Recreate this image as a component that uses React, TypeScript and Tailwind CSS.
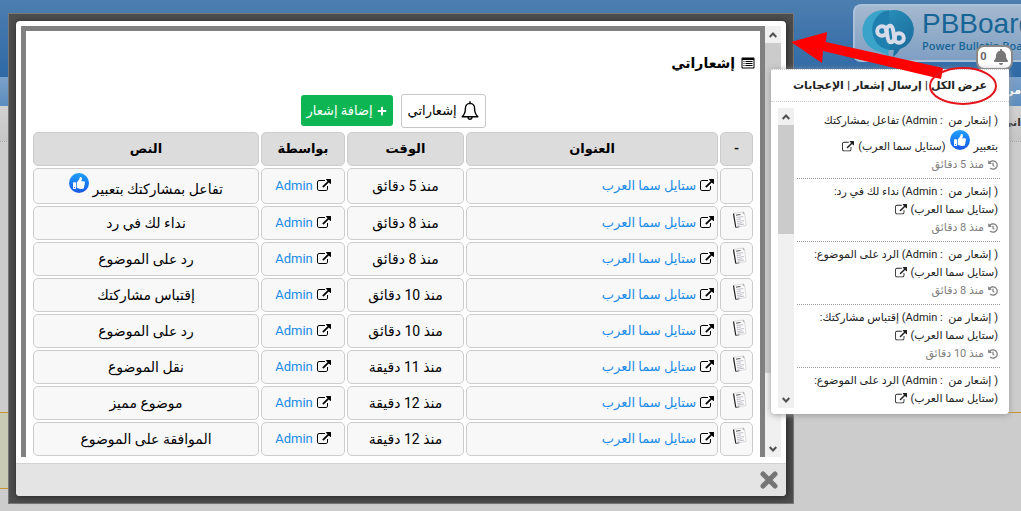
import { useState } from "react";
import { FaBell, FaHistory, FaPlus, FaThumbsUp } from "react-icons/fa";

type Row = { id: number; text: string; time: string; isNew?: boolean };

const rows: Row[] = [
  { id: 1, text: "تفاعل بمشاركتك بتعبير", time: "منذ 5 دقائق", isNew: true },
  { id: 2, text: "نداء لك في رد", time: "منذ 8 دقائق" },
  { id: 3, text: "رد على الموضوع", time: "منذ 8 دقائق" },
  { id: 4, text: "إقتباس مشاركتك", time: "منذ 10 دقائق" },
  { id: 5, text: "رد على الموضوع", time: "منذ 10 دقائق" },
  { id: 6, text: "نقل الموضوع", time: "منذ 11 دقيقة" },
  { id: 7, text: "موضوع مميز", time: "منذ 12 دقيقة" },
  { id: 8, text: "الموافقة على الموضوع", time: "منذ 12 دقيقة" },
];

const alerts = [
  { id: 1, text: "نداء لك في رد:", time: "منذ 8 دقائق" },
  { id: 2, text: "الرد على الموضوع:", time: "منذ 8 دقائق" },
  { id: 3, text: "إقتباس مشاركتك:", time: "منذ 10 دقائق" },
  { id: 4, text: "الرد على الموضوع:", time: "منذ 10 دقائق" },
];

function ExternalIcon({ className }: { className: string }) {
  return (
    <svg viewBox="0 0 1792 1792" fill="currentColor" className={className}>
      <path d="M1408 928v320q0 119-84.5 203.5t-203.5 84.5h-832q-119 0-203.5-84.5t-84.5-203.5v-832q0-119 84.5-203.5t203.5-84.5h704q14 0 23 9t9 23v64q0 14-9 23t-23 9h-704q-66 0-113 47t-47 113v832q0 66 47 113t113 47h832q66 0 113-47t47-113v-320q0-14 9-23t23-9h64q14 0 23 9t9 23zm384-864v512q0 26-19 45t-45 19-45-19l-176-176-652 652q-10 10-23 10t-23-10l-114-114q-10-10-10-23t10-23l652-652-176-176q-19-19-19-45t19-45 45-19h512q26 0 45 19t19 45z" />
    </svg>
  );
}

function BellOutline() {
  return (
    <svg viewBox="0 0 18 20" fill="none" stroke="currentColor" strokeWidth="1.4" strokeLinejoin="round" className="h-5 w-[18px]">
      <path d="M9 2.4C5.8 2.6 4.4 5 4.4 7.6c0 4.200-.9 6.100-3.200 8.200h15.600c-2.300-2.100-3.200-4-3.200-8.200C13.600 5 12.200 2.600 9 2.400z" />
      <path d="M9 .8v1.600M7 16.200c.1 1.200.9 2 2 2s1.900-.8 2-2" strokeLinecap="round" />
    </svg>
  );
}

function ListIcon() {
  return (
    <svg viewBox="0 0 14 12" className="h-3 w-3.5">
      <path fillRule="evenodd" d="M1.500.5h11c.6 0 1 .4 1 1v9c0 .6-.4 1-1 1h-11c-.6 0-1-.4-1-1v-9c0-.6.4-1 1-1zM1.500 3v7.500h11V3z" />
      <path d="M2.500 4h1v1h-1zM2.500 6h1v1h-1zM2.500 8h1v1h-1zM4.500 4h7v1h-7zM4.500 6h7v1h-7zM4.500 8h7v1h-7z" />
    </svg>
  );
}

function PaperIcon() {
  return (
    <svg viewBox="0 0 16 18" className="ms-1 mb-1.5 h-[18px] w-4">
      <path d="M1.500 2.500L11 1l1.500 1 1.500 12.500-10.200 2z" fill="#fbfbfb" stroke="#c4c4c4" strokeWidth=".6" />
      <path d="M1.500 2.600l2.300 13.900" stroke="#222" strokeWidth="1.200" />
      <path d="M3.800 16.500l3.500-.7" stroke="#555" strokeWidth=".8" />
      <path d="M4 4.200l4.500-.7" stroke="#444" strokeWidth=".9" />
      <path d="M4.300 6.500l7-.9M4.600 8.500l4.500-.6M4.900 10.500l7-.9M5.200 12.500l5-.7M5.500 14.200l6.500-1.100" stroke="#a2a2b0" strokeWidth=".7" />
      <path d="M11 1l-.2 1.700 1.700-.5z" fill="#888" />
    </svg>
  );
}

function LikeBadge() {
  return (
    <span className="mb-1.5 inline-flex size-5 shrink-0 items-center justify-center rounded-full bg-linear-to-b from-[#22a0ff] to-[#1b55e4] align-bottom text-white">
      <FaThumbsUp className="size-3" />
    </span>
  );
}

function Chevron({ up }: { up?: boolean }) {
  return (
    <svg viewBox="0 0 8 6" fill="none" stroke="#505050" strokeWidth="2" className="h-1.5 w-2">
      <path d={up ? "M.7 5L4 1.500 7.300 5" : "M.7 1L4 4.500 7.300 1"} />
    </svg>
  );
}

function ScrollTrack({ thumb }: { thumb: string }) {
  return (
    <div className="flex w-4 shrink-0 flex-col items-center bg-[#f0f0f0]">
      <div className="flex h-[17px] shrink-0 items-center"><Chevron up /></div>
      <div className="flex min-h-0 w-full flex-1 flex-col">
        <div className={`bg-[#cbcbcb] ${thumb}`} />
      </div>
      <div className="flex h-[17px] shrink-0 items-center"><Chevron /></div>
    </div>
  );
}

function Logo() {
  return (
    <svg viewBox="0 0 52 50" className="h-[50px] w-[52px] shrink-0">
      <defs>
        <linearGradient id="drop" x1="0" y1="0" x2="0.6" y2="1">
          <stop offset="0" stopColor="#2b93be" />
          <stop offset="1" stopColor="#1b6c9c" />
        </linearGradient>
      </defs>
      <path d="M21 2a21 21 0 0 0-6 41c4 1 8 2 12 6l-1-6a21 21 0 0 0-5-41z" fill="#3aa3c9" />
      <path d="M31 2a20 20 0 0 1 7 39c-2 3-4 6-7 8l1-7A20 20 0 0 1 31 2z" fill="url(#drop)" />
      <path d="M27 2A20 20 0 0 0 13 32c2 5 8 9 15 10" fill="#1f7fae" />
      <g fill="none" stroke="#d6dbea" strokeLinecap="round">
        <circle cx="20" cy="23" r="4.800" strokeWidth="4" />
        <circle cx="37" cy="30" r="4.800" strokeWidth="4" />
        <path d="M24 22c2 4 1 11 4 12 3 1 4-2 5-5M33 31c-2-4-1-12-4-13-3-1-4 2-5 4" strokeWidth="4" />
      </g>
    </svg>
  );
}

function ForumPage() {
  return (
    <div>
      <header className="flex h-[77px] items-start justify-end bg-linear-to-b from-[#4d7eb0] to-[#2d69a6] pt-1">
        <div className="flex h-[58px] w-[168px] shrink-0 items-start rounded-s-lg border-2 border-e-0 border-[#a9c0d8] bg-linear-to-b from-[#a5b9cf] to-[#7f9fc3] ps-[7px] pt-0.5">
          <Logo />
          <div className="ps-2 whitespace-nowrap text-[#176596]">
            <p className="font-['Liberation_Sans'] text-[28px] leading-8">PBBoard</p>
            <p className="font-['Open_Sans'] text-[11px] leading-3 font-semibold">Power Bulletin Board</p>
          </div>
        </div>
      </header>
      <nav className="flex h-[29px] items-center justify-end bg-linear-to-b from-[#7ba2cb] to-[#5c8dbd]">
        <a href="#forum" className="text-[11px] font-bold text-white">من</a>
      </nav>
      <div className="flex h-9 items-center justify-end border-b border-dotted border-[#a5a5a5] bg-linear-to-b from-[#d2d2d2] to-[#c6c6c6]">
        <a href="#side" className="text-[11px] font-bold text-[#333]">اني</a>
      </div>
      <div className="mt-[270px] flex">
        <div className="h-[77px] flex-1 border-y border-[#c8962e] bg-[#c9cbb4]" />
        <div className="flex-1 border-t border-[#c8962e]" />
      </div>
    </div>
  );
}

const cell = "h-[34px] rounded-[5px] border border-[#cccccc] p-0";

function AlertTable() {
  return (
    <table className="w-full table-fixed border-separate border-spacing-0.5 text-center text-sm leading-5">
      <thead>
        <tr className="text-[13px] font-bold">
          <th className={`${cell} w-[33px] bg-[#dcdcdc]`}>-</th>
          <th className={`${cell} bg-[#dcdcdc]`}>العنوان</th>
          <th className={`${cell} w-[117px] bg-[#dcdcdc]`}>الوقت</th>
          <th className={`${cell} w-[84px] bg-[#dcdcdc]`}>بواسطة</th>
          <th className={`${cell} w-[226px] bg-[#dcdcdc]`}>النص</th>
        </tr>
      </thead>
      <tbody>
        {rows.map((row) => (
          <tr key={row.id} className={row.isNew ? "h-9" : ""}>
            <td className={`${cell} bg-[#f8f8f8]`}>{!row.isNew && <PaperIcon />}</td>
            <td className={`${cell} bg-[#f8f8f8]`}>
              <a href="#topic" className="flex items-center gap-1 ps-[3px] text-[13px] text-[#1a8be6]">
                <ExternalIcon className="size-3.5 text-black" />
                <span>ستايل سما العرب</span>
              </a>
            </td>
            <td className={`${cell} bg-[#f8f8f8]`}>{row.time}</td>
            <td className={`${cell} bg-[#f8f8f8]`}>
              <a href="#admin" className="flex items-center justify-center gap-1 text-[13px] text-[#1a8be6]">
                <ExternalIcon className="size-3.5 text-black" />
                <span>Admin</span>
              </a>
            </td>
            <td className={`${cell} bg-[#f8f8f8]`}>
              {row.text} {row.isNew && <LikeBadge />}
            </td>
          </tr>
        ))}
      </tbody>
    </table>
  );
}

function AlertDialog({ onClose }: { onClose: () => void }) {
  return (
    <div className="absolute top-[13px] left-2 w-[77%] border border-[#777777] bg-[#4e4e4e] p-[7px]">
      <div className="overflow-hidden rounded-sm bg-white shadow-[1px_1px_7px_#222222]">
        <div className="flex h-[442px] px-[5px] pt-[5px] pb-1.5">
          <div className="min-w-0 flex-1 overflow-hidden border-5 border-b-0 border-[#808080] px-[5px]" dir="rtl">
            <h1 className="mt-5 flex h-6 items-center gap-1.5 text-sm font-bold">
              <ListIcon />
              <span>إشعاراتي</span>
            </h1>
            <div className="mt-[18px] mb-0.5 flex h-[35px] items-center justify-center gap-2 text-[13px]">
              <button type="button" className="flex h-[34px] items-center gap-1 rounded-[3px] border border-[#c8c8c8] px-1.5">
                <BellOutline />
                إشعاراتي
              </button>
              <button type="button" className="flex h-[31px] items-center gap-1 rounded-[3px] bg-[#0db653] px-1.5 text-white">
                <FaPlus className="size-2.5" />
                إضافة إشعار
              </button>
            </div>
            <AlertTable />
          </div>
          <ScrollTrack thumb="h-[83%]" />
        </div>
        <div className="flex h-[33px] items-center justify-end border-t border-[#d2d2d2] bg-[#e4e4e4] pe-2">
          <button type="button" aria-label="إغلاق" onClick={onClose}>
            <svg viewBox="0 0 18 18" stroke="#757575" strokeWidth="5" strokeLinecap="round" className="size-[18px]">
              <path d="M3 3l12 12M15 3L3 15" />
            </svg>
          </button>
        </div>
      </div>
    </div>
  );
}

function AlertMenu() {
  return (
    <div className="absolute top-[69px] right-3 w-[238px] rounded-b-sm bg-white text-[11px] leading-[18px] text-[#222222] shadow-[0_1px_6px_#999999]" dir="rtl">
      <div className="flex h-[33px] items-center justify-between border-y border-dotted border-[#cccccc] px-[22px] font-bold whitespace-nowrap">
        <a href="#all">عرض الكل</a>
        <span>|</span>
        <a href="#send">إرسال إشعار</a>
        <span>|</span>
        <a href="#likes">الإعجابات</a>
      </div>
      <div className="mt-1.5 mb-1.5 flex h-[300px] ps-[9px] pe-[7px]">
        <ul className="min-w-0 flex-1 overflow-hidden pe-[3px]">
          <li className="border-b border-dotted border-[#999999] px-0.5 py-1">
            <p className="whitespace-nowrap">( إشعار من &nbsp;: Admin) تفاعل بمشاركتك</p>
            <p className="flex h-[26px] items-end gap-1">
              <span>بتعبير</span>
              <LikeBadge />
              <a href="#topic" className="flex items-center gap-1">(ستايل سما العرب) <ExternalIcon className="size-3" /></a>
            </p>
            <p className="flex items-center gap-1 text-[#808080]"><FaHistory className="size-2.5" /> منذ 5 دقائق</p>
          </li>
          {alerts.map((alert) => (
            <li key={alert.id} className="border-b border-dotted border-[#999999] px-0.5 py-1">
              <p className="whitespace-nowrap">( إشعار من &nbsp;: Admin) {alert.text}</p>
              <a href="#topic" className="flex items-center gap-1">(ستايل سما العرب) <ExternalIcon className="size-3" /></a>
              <p className="flex items-center gap-1 text-[#808080]"><FaHistory className="size-2.5" /> {alert.time}</p>
            </li>
          ))}
        </ul>
        <ScrollTrack thumb="h-[41%]" />
      </div>
    </div>
  );
}

export default function App() {
  const [open, setOpen] = useState(true);

  return (
    <div className="relative min-h-screen overflow-hidden bg-[#cccccc] font-['Roboto','Noto_Sans','DejaVu_Sans',sans-serif] text-black">
      <ForumPage />
      {open && <AlertDialog onClose={() => setOpen(false)} />}
      <button type="button" className="absolute top-[45px] right-2 flex h-[25px] w-[37px] items-start justify-center gap-1.5 rounded-lg border-2 border-[#888888] bg-white pt-0.5 text-[11px] leading-4 font-bold text-[#666666]">
        0
        <FaBell className="size-4 text-[#777777]" />
      </button>
      <AlertMenu />
      {/* pointer from "view all" to the dialog */}
      <svg viewBox="0 0 210 80" className="pointer-events-none absolute top-[30px] right-[21px] h-20 w-[210px]">
        <path d="M1 12L37 2l-1 10 117 26-2 11L33 21l-1 12z" fill="#ff0000" />
        <ellipse cx="173" cy="56" rx="33" ry="18" fill="none" stroke="#e3141b" strokeWidth="2" />
      </svg>
    </div>
  );
}
